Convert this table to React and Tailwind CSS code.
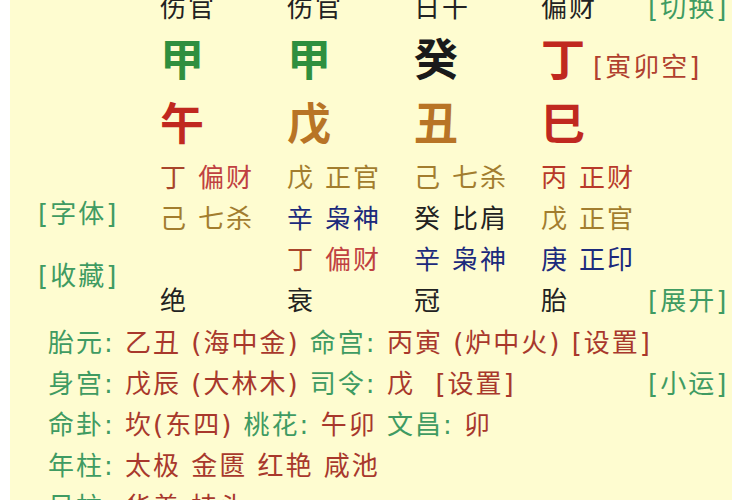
const FONT = { fontFamily: '"DejaVu Sans", "Noto Sans CJK SC", sans-serif' };

const G = "text-[#3f9b62]";

const Cell = ({ parts }) => (
  <div className="flex items-center whitespace-nowrap">
    {parts.map(([t, c], i) => (
      <span key={i} className={`${c} ${i ? "ml-[10px]" : ""}`}>{t}</span>
    ))}
  </div>
);

const tenGods = [
  [
    [["丁", "text-[#a8452a]"], ["偏财", "text-[#c04040]"]],
    [["戊", "text-[#a27d2e]"], ["正官", "text-[#a27d2e]"]],
    [["己", "text-[#a27d2e]"], ["七杀", "text-[#a27d2e]"]],
    [["丙", "text-[#b83a2a]"], ["正财", "text-[#b83a2a]"]],
  ],
  [
    [["己", "text-[#a27d2e]"], ["七杀", "text-[#a27d2e]"]],
    [["辛", "text-[#1c2a7c]"], ["枭神", "text-[#1c2a7c]"]],
    [["癸", "text-[#222]"], ["比肩", "text-[#222]"]],
    [["戊", "text-[#a27d2e]"], ["正官", "text-[#a27d2e]"]],
  ],
  [
    [],
    [["丁", "text-[#a8452a]"], ["偏财", "text-[#c04040]"]],
    [["辛", "text-[#1c2a7c]"], ["枭神", "text-[#1c2a7c]"]],
    [["庚", "text-[#1c2a7c]"], ["正印", "text-[#1c2a7c]"]],
  ],
];

const R = "text-[#a8382c]";

const lines = [
  [["胎元: ", G], ["乙丑 (海中金) ", R], ["命宫: ", G], ["丙寅 (炉中火) [设置]", R]],
  [["身宫: ", G], ["戊辰 (大林木) ", R], ["司令: ", G], ["戊  [设置]", R]],
  [["命卦: ", G], ["坎(东四) ", R], ["桃花: ", G], ["午卯 ", R], ["文昌: ", G], ["卯", R]],
  [["年柱: ", G], ["太极 金匮 红艳 咸池", R]],
  [["日柱: ", G], ["华盖 持头", R]],
];

const sideRight = { 1: "[小运]" };

export default function App() {
  return (
    <div className="w-[750px] h-[500px] bg-white overflow-hidden">
      <div
        className="ml-[10px] w-[722px] h-[500px] bg-[#fefcd0] overflow-hidden text-[26px] tracking-[2px] leading-none"
        style={FONT}
      >
        <div className="-mt-[12px]">
          {/* header */}
          <div className="grid grid-cols-[150px_127px_127px_127px_107px_auto] h-[40px] items-center text-[#222]">
            <div />
            <div>伤官</div>
            <div>伤官</div>
            <div>日干</div>
            <div>偏财</div>
            <div className={G}>[切换]</div>
          </div>

          {/* stems */}
          <div className="grid grid-cols-[150px_127px_127px_127px_auto] h-[66px] items-center text-[44px] font-bold tracking-normal">
            <div />
            <div className="text-[#2f8f3f]">甲</div>
            <div className="text-[#2f8f3f]">甲</div>
            <div className="text-[#1a1a1a]">癸</div>
            <div className="flex items-center">
              <span className="text-[#c0281f]">丁</span>
              <span className="ml-[8px] mt-[12px] text-[26px] font-normal tracking-[2px] text-[#b0402e]">[寅卯空]</span>
            </div>
          </div>

          {/* branches */}
          <div className="grid grid-cols-[150px_127px_127px_127px_127px] h-[62px] items-center text-[44px] font-bold tracking-normal">
            <div />
            <div className="text-[#c0281f]">午</div>
            <div className="text-[#b87426]">戊</div>
            <div className="text-[#b87426]">丑</div>
            <div className="text-[#c0281f]">巳</div>
          </div>

          {/* hidden stems */}
          <div className="flex mt-[1px]">
            <div className={`w-[150px] shrink-0 pl-[28px] pt-[39px] flex flex-col gap-[26px] whitespace-nowrap ${G}`}>
              <div className="h-[36px] flex items-center">[字体]</div>
              <div className="h-[36px] flex items-center">[收藏]</div>
            </div>
            <div className="flex-1">
              {tenGods.map((row, i) => (
                <div key={i} className="grid grid-cols-[127px_127px_127px_107px] h-[41px] items-center">
                  {row.map((parts, j) => (
                    <Cell key={j} parts={parts} />
                  ))}
                </div>
              ))}
              <div className="grid grid-cols-[127px_127px_127px_107px_auto] h-[41px] items-center text-[#222]">
                <div>绝</div>
                <div>衰</div>
                <div>冠</div>
                <div>胎</div>
                <div className={G}>[展开]</div>
              </div>
            </div>
          </div>

          {/* details */}
          <div className="mt-[1px]">
            {lines.map((parts, i) => (
              <div key={i} className="flex h-[41px] items-center">
                <div className="w-[638px] shrink-0 pl-[38px] whitespace-pre">
                  {parts.map(([t, c], j) => (
                    <span key={j} className={c}>{t}</span>
                  ))}
                </div>
                {sideRight[i] ? <div className={`${G} whitespace-nowrap`}>{sideRight[i]}</div> : null}
              </div>
            ))}
          </div>
        </div>
      </div>
    </div>
  );
}
